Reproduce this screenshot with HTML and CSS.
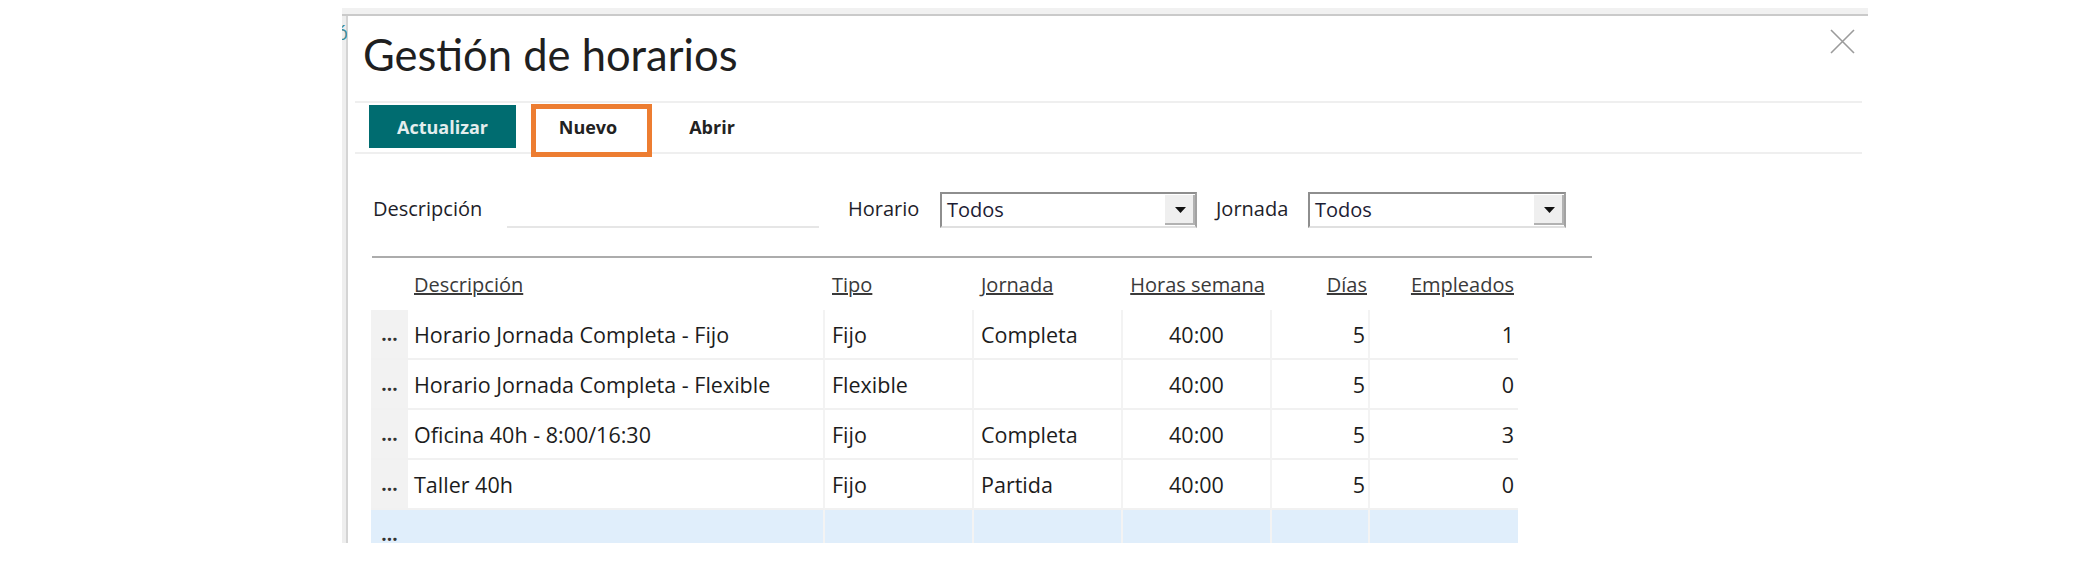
FILE: index.html
```html
<!DOCTYPE html>
<html>
<head>
    <meta charset="utf-8">
    <title>Gestión de horarios</title>
    <link rel="stylesheet" href="styles.css">
</head>
<body>
    <div class="page">
        <!-- text of the page behind the dialog, peeking over its edge -->
        <span class="peek"><span>ó</span></span>

        <div class="window">
            <div class="window-top"></div>
            <div class="window-frame">
                <div class="window-body">
                    <div class="titlebar">
                        <h1 class="title">Gestión de horarios</h1>
                        <span class="close-btn">
                            <svg width="25" height="25" viewBox="0 0 25 25"><path d="M1 1L24 24M24 1L1 24" stroke="#9b9b9b" stroke-width="1.6" fill="none"/></svg>
                        </span>
                    </div>

                    <div class="toolbar">
                        <button class="btn btn-primary">Actualizar</button>
                        <button class="btn btn-new">Nuevo<span class="highlight"></span></button>
                        <button class="btn btn-open">Abrir</button>
                    </div>

                    <div class="filters">
                        <label class="filter-label label-desc">Descripción</label>
                        <div class="text-input"></div>
                        <label class="filter-label label-horario">Horario</label>
                        <div class="combo combo-horario">
                            <span class="combo-value">Todos</span>
                            <span class="combo-arrow"><svg width="11" height="6" viewBox="0 0 11 6"><polygon points="0,0 11,0 5.5,6" fill="#111"/></svg></span>
                        </div>
                        <label class="filter-label label-jornada">Jornada</label>
                        <div class="combo combo-jornada">
                            <span class="combo-value">Todos</span>
                            <span class="combo-arrow"><svg width="11" height="6" viewBox="0 0 11 6"><polygon points="0,0 11,0 5.5,6" fill="#111"/></svg></span>
                        </div>
                    </div>

                    <div class="divider"></div>

                    <div class="grid">
                        <div class="grid-row grid-head">
                            <div class="head-cell"></div>
                            <div class="head-cell col-desc"><span>Descripción</span></div>
                            <div class="head-cell col-left"><span>Tipo</span></div>
                            <div class="head-cell col-left"><span>Jornada</span></div>
                            <div class="head-cell col-center"><span>Horas semana</span></div>
                            <div class="head-cell col-dias"><span>Días</span></div>
                            <div class="head-cell col-emp"><span>Empleados</span></div>
                        </div>

                        <div class="grid-row">
                            <div class="cell gutter">...</div>
                            <div class="cell col-desc">Horario Jornada Completa - Fijo</div>
                            <div class="cell col-left">Fijo</div>
                            <div class="cell col-left">Completa</div>
                            <div class="cell col-center">40:00</div>
                            <div class="cell col-dias">5</div>
                            <div class="cell col-emp">1</div>
                        </div>
                        <div class="grid-row">
                            <div class="cell gutter">...</div>
                            <div class="cell col-desc">Horario Jornada Completa - Flexible</div>
                            <div class="cell col-left">Flexible</div>
                            <div class="cell col-left"></div>
                            <div class="cell col-center">40:00</div>
                            <div class="cell col-dias">5</div>
                            <div class="cell col-emp">0</div>
                        </div>
                        <div class="grid-row">
                            <div class="cell gutter">...</div>
                            <div class="cell col-desc">Oficina 40h - 8:00/16:30</div>
                            <div class="cell col-left">Fijo</div>
                            <div class="cell col-left">Completa</div>
                            <div class="cell col-center">40:00</div>
                            <div class="cell col-dias">5</div>
                            <div class="cell col-emp">3</div>
                        </div>
                        <div class="grid-row">
                            <div class="cell gutter">...</div>
                            <div class="cell col-desc">Taller 40h</div>
                            <div class="cell col-left">Fijo</div>
                            <div class="cell col-left">Partida</div>
                            <div class="cell col-center">40:00</div>
                            <div class="cell col-dias">5</div>
                            <div class="cell col-emp">0</div>
                        </div>
                        <div class="grid-row is-new">
                            <div class="cell gutter">...</div>
                            <div class="cell col-desc"></div>
                            <div class="cell col-left"></div>
                            <div class="cell col-left"></div>
                            <div class="cell col-center"></div>
                            <div class="cell col-dias"></div>
                            <div class="cell col-emp"></div>
                        </div>
                    </div>
                </div>
            </div>
        </div>
    </div>
</body>
</html>
```

FILE: styles.css
```css
body {
    margin: 0;
    background: #fff;
    font-family: 'Open Sans', 'Lato', sans-serif;
    color: #1c1c1c;
    overflow: hidden;
}
.page {
    position: relative;
    height: 580px;
    padding: 8px 0 0 342px;
    box-sizing: border-box;
}
.peek {
    position: absolute;
    left: 342px;
    top: 22px;
    width: 5px;
    height: 22px;
    overflow: hidden;
    z-index: 2;
    font-size: 20px;
    line-height: 22px;
    color: #3a8d9c;
}
.peek span {
    display: block;
    margin-left: -6px;
}

/* dialog frame */
.window {
    width: 1526px;
    height: 535px;
    overflow: hidden;
    display: flex;
    flex-direction: column;
}
.window-top {
    flex: none;
    height: 6px;
    background: #f1f1f1;
    border-bottom: 2px solid #cacaca;
}
.window-frame {
    flex: 1;
    display: flex;
    border-left: 4px solid #eeeeee;
}
.window-body {
    flex: 1;
    border-left: 2px solid #d4d4d4;
}

/* title */
.titlebar {
    display: flex;
    justify-content: space-between;
    align-items: flex-start;
    height: 85px;
    padding: 12px 13px 0 15px;
    box-sizing: border-box;
}
.title {
    margin: 0;
    font-family: 'Lato', sans-serif;
    font-size: 43.5px;
    font-weight: 400;
    line-height: 53px;
    color: #1f1f1f;
}
.close-btn {
    margin-top: 1px;
    line-height: 0;
}

/* toolbar */
.toolbar {
    display: flex;
    gap: 14px;
    height: 53px;
    margin: 0 6px 0 7px;
    padding: 2px 0 0 14px;
    box-sizing: border-box;
    border-top: 2px solid #efefef;
    border-bottom: 2px solid #efefef;
}
.btn {
    position: relative;
    height: 43px;
    padding: 0;
    border: 0;
    background: none;
    font-family: inherit;
    font-size: 18px;
    font-weight: 700;
    color: #222;
}
.btn-primary {
    width: 147px;
    background: #006c70;
    color: #e3eded;
}
.btn-new {
    width: 116px;
}
.btn-open {
    width: 104px;
}
.highlight {
    position: absolute;
    left: 1px;
    top: -1px;
    width: 121px;
    height: 53px;
    border: 5px solid #ed7d31;
    box-sizing: border-box;
}

/* filters */
.filters {
    display: flex;
    align-items: flex-start;
    height: 102px;
    padding: 38px 0 0 25px;
    box-sizing: border-box;
}
.filter-label {
    font-size: 20px;
    line-height: 33px;
    color: #1e1e2a;
}
.label-desc {
    width: 134px;
}
.label-horario {
    width: 92px;
    margin-left: 29px;
}
.label-jornada {
    width: 92px;
    margin-left: 19px;
}
.text-input {
    width: 312px;
    height: 36px;
    box-sizing: border-box;
    border-bottom: 2px solid #e6e6e6;
}
.combo {
    display: flex;
    justify-content: space-between;
    align-items: center;
    height: 36px;
    padding-left: 5px;
    box-sizing: border-box;
    border: 2px solid #8e8e8e;
    border-right-color: #a2a2a2;
    border-bottom-color: #e0e0e0;
    background: #fff;
}
.combo-horario {
    width: 257px;
}
.combo-jornada {
    width: 258px;
}
.combo-value {
    font-size: 20px;
    line-height: 32px;
    color: #1d1d35;
}
.combo-arrow {
    display: flex;
    justify-content: center;
    align-items: center;
    width: 30px;
    height: 30px;
    background: #efefef;
    box-shadow: inset -2px -2px 0 #b2b2b2;
}

.divider {
    width: 1220px;
    height: 2px;
    margin-left: 24px;
    background: #acacac;
}

/* table */
.grid {
    width: 1147px;
    margin-left: 23px;
}
.grid-row {
    display: grid;
    grid-template-columns: 37px 417px 149px 149px 149px 98px 148px;
}
.grid-head {
    height: 52px;
}
.head-cell {
    padding-top: 15px;
    font-size: 20px;
    line-height: 24px;
    color: #3a3a3a;
    white-space: nowrap;
}
.head-cell span {
    text-decoration: underline;
}
.cell {
    height: 50px;
    padding-top: 1px;
    box-sizing: border-box;
    border-right: 2px solid #f3f3f3;
    border-bottom: 2px solid #f1f1f1;
    font-size: 21.5px;
    line-height: 47px;
    white-space: nowrap;
    overflow: hidden;
}
.cell.col-emp {
    border-right: 0;
}
.gutter {
    border-right: 0;
    background: #f2f2f2;
    text-align: center;
    font-size: 19px;
    font-weight: 700;
    color: #333;
}
.col-desc {
    padding-left: 6px;
}
.col-left {
    padding-left: 7px;
}
.col-center {
    text-align: center;
}
.col-dias {
    text-align: right;
    padding-right: 3px;
}
.col-emp {
    text-align: right;
    padding-right: 4px;
}
.is-new .cell {
    background: #e0eefb;
}
```
